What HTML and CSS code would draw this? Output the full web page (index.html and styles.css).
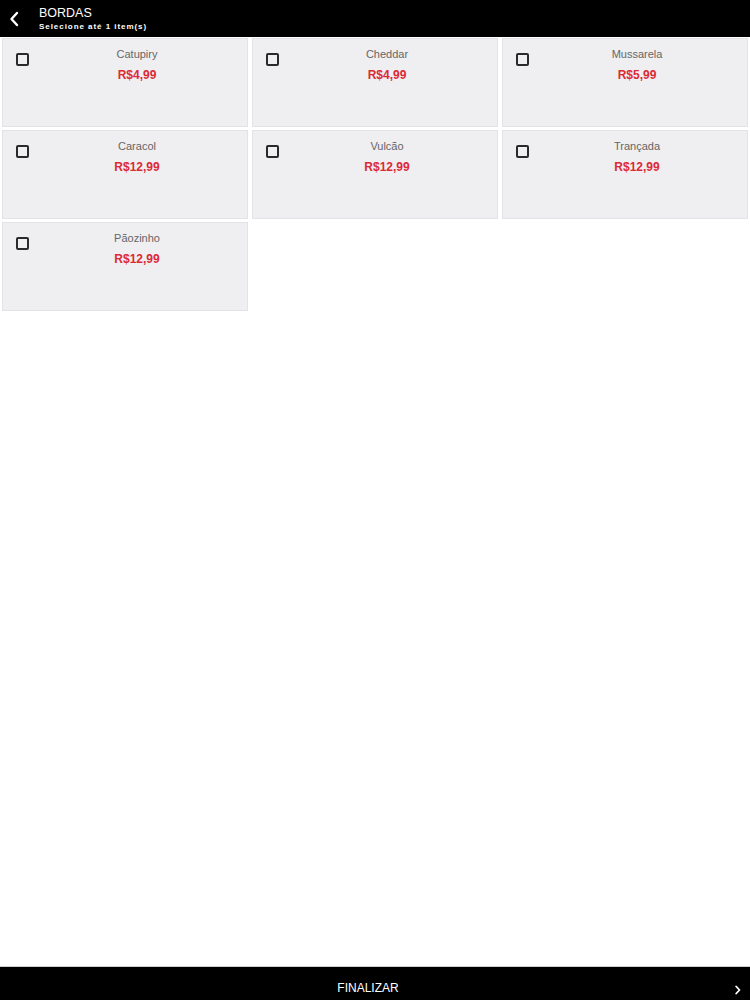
FILE: index.html
```html
<!DOCTYPE html>
<html lang="pt-BR">
<head>
    <meta charset="UTF-8">
    <meta name="viewport" content="width=device-width, initial-scale=1.0">
    <title>Bordas</title>
    <link rel="stylesheet" href="styles.css">
</head>
<body>
    <header class="topbar">
        <button class="back" aria-label="Voltar">
            <svg width="10" height="16" viewBox="0 0 10 16"><path d="M8 2 L2.5 8 L8 14" fill="none" stroke="#fff" stroke-width="2.4" stroke-linecap="round" stroke-linejoin="round"/></svg>
        </button>
        <div class="titles">
            <div class="title">BORDAS</div>
            <div class="subtitle">Selecione até 1 item(s)</div>
        </div>
    </header>

    <main class="grid">
        <label class="card">
            <span class="check"></span>
            <span class="info">
                <span class="name">Catupiry</span>
                <span class="price">R$4,99</span>
            </span>
        </label>
        <label class="card">
            <span class="check"></span>
            <span class="info">
                <span class="name">Cheddar</span>
                <span class="price">R$4,99</span>
            </span>
        </label>
        <label class="card">
            <span class="check"></span>
            <span class="info">
                <span class="name">Mussarela</span>
                <span class="price">R$5,99</span>
            </span>
        </label>
        <label class="card">
            <span class="check"></span>
            <span class="info">
                <span class="name">Caracol</span>
                <span class="price">R$12,99</span>
            </span>
        </label>
        <label class="card">
            <span class="check"></span>
            <span class="info">
                <span class="name">Vulcão</span>
                <span class="price">R$12,99</span>
            </span>
        </label>
        <label class="card">
            <span class="check"></span>
            <span class="info">
                <span class="name">Trançada</span>
                <span class="price">R$12,99</span>
            </span>
        </label>
        <label class="card">
            <span class="check"></span>
            <span class="info">
                <span class="name">Pãozinho</span>
                <span class="price">R$12,99</span>
            </span>
        </label>
    </main>

    <footer class="bottombar">
        <span class="finish">FINALIZAR</span>
        <svg class="next" width="6" height="10" viewBox="0 0 6 10"><path d="M1.2 1.5 L4.5 5 L1.2 8.5" fill="none" stroke="#fff" stroke-width="1.8" stroke-linecap="round" stroke-linejoin="round"/></svg>
    </footer>
</body>
</html>
```

FILE: styles.css
```css
* {
    box-sizing: border-box;
}
body {
    margin: 0;
    font-family: "Liberation Sans", Arial, sans-serif;
    background-color: #ffffff;
    height: 1000px;
    display: flex;
    flex-direction: column;
}
.topbar {
    background-color: #000000;
    color: #ffffff;
    height: 37px;
    display: flex;
    align-items: center;
}
.back {
    background: none;
    border: none;
    padding: 0;
    width: 26px;
    height: 37px;
    display: flex;
    align-items: center;
    justify-content: center;
    margin-left: 1px;
    margin-right: 12px;
}
.titles {
    display: flex;
    flex-direction: column;
    margin-top: 1px;
}
.title {
    font-size: 12.5px;
    line-height: 15px;
}
.subtitle {
    font-size: 8px;
    font-weight: bold;
    letter-spacing: 0.95px;
    line-height: 10px;
    margin-top: 1px;
}
.grid {
    display: grid;
    grid-template-columns: repeat(3, 1fr);
    grid-auto-rows: 89px;
    gap: 3px 4px;
    padding: 1px 2px;
    flex: 1;
    align-content: start;
}
.card {
    background-color: #efeef1;
    border: 1px solid #e3e2e6;
    display: flex;
    align-items: flex-start;
    padding: 14px 2px 0 13px;
}
.check {
    width: 13px;
    height: 13px;
    border: 2px solid #2a2a2a;
    border-radius: 2px;
    flex-shrink: 0;
}
.info {
    flex: 1;
    display: flex;
    flex-direction: column;
    align-items: center;
    margin-top: -7px;
}
.name {
    font-size: 11px;
    color: #666666;
    line-height: 16px;
}
.price {
    font-size: 12px;
    font-weight: bold;
    color: #dc2a36;
    line-height: 18px;
    margin-top: 4px;
}
.bottombar {
    background-color: #000000;
    border-top: 1px solid #cfcfcf;
    height: 34px;
    display: flex;
    align-items: center;
    justify-content: center;
    position: relative;
    color: #ffffff;
}
.finish {
    font-size: 12px;
    margin-left: -14px;
    margin-top: 9px;
}
.next {
    position: absolute;
    right: 9px;
    top: 18px;
}
```
